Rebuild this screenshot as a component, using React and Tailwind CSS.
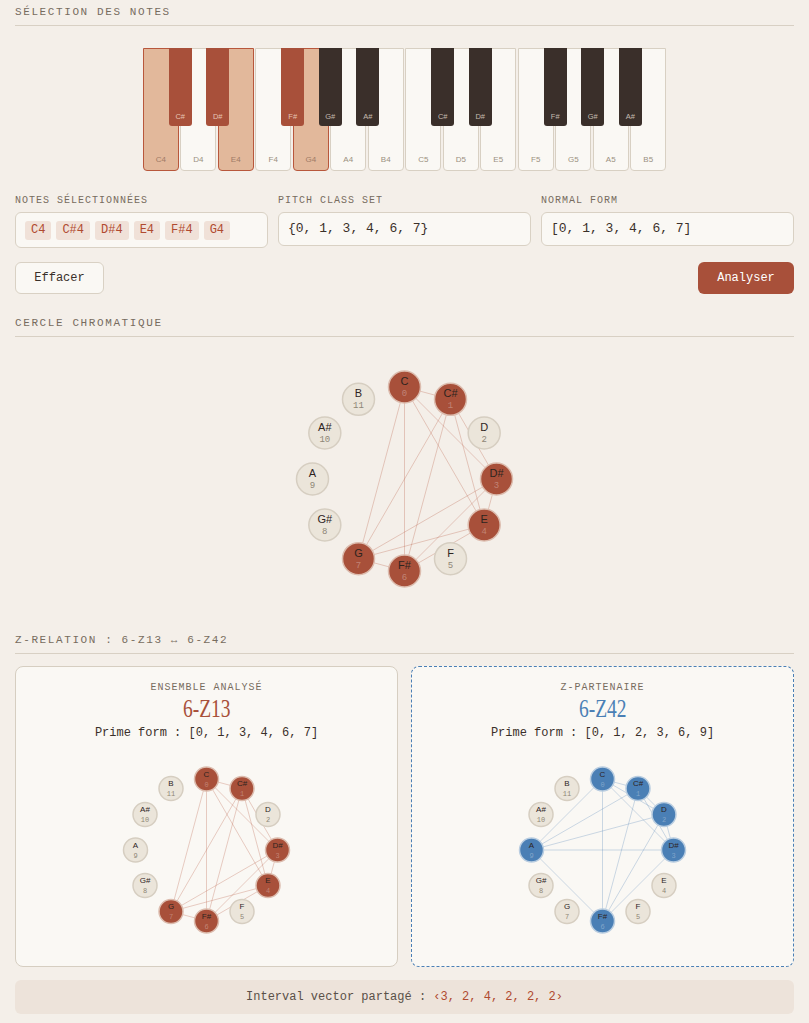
const NOTES = ['C', 'C#', 'D', 'D#', 'E', 'F', 'F#', 'G', 'G#', 'A', 'A#', 'B']

const WHITES = [
  { n: 'C4', on: true }, { n: 'D4' }, { n: 'E4', on: true }, { n: 'F4' }, { n: 'G4', on: true },
  { n: 'A4' }, { n: 'B4' }, { n: 'C5' }, { n: 'D5' }, { n: 'E5' }, { n: 'F5' }, { n: 'G5' },
  { n: 'A5' }, { n: 'B5' },
]

const BLACKS = [
  { n: 'C#', at: 1, on: true }, { n: 'D#', at: 2, on: true }, { n: 'F#', at: 4, on: true },
  { n: 'G#', at: 5 }, { n: 'A#', at: 6 }, { n: 'C#', at: 8 }, { n: 'D#', at: 9 },
  { n: 'F#', at: 11 }, { n: 'G#', at: 12 }, { n: 'A#', at: 13 },
]

const CHIPS = ['C4', 'C#4', 'D#4', 'E4', 'F#4', 'G4']

function Heading({ children }) {
  return (
    <div className="border-b border-[#d8d0c4] pb-[5px] text-[11px] leading-4 tracking-[1.6px] text-[#776c5e]">
      {children}
    </div>
  )
}

function Piano() {
  return (
    <div className="relative mx-auto mt-[22px] flex h-[123px] w-[523.5px] gap-[1.5px] font-['Liberation_Sans',sans-serif]">
      {WHITES.map(k => (
        <div key={k.n}
          className={k.on
            ? 'flex h-full w-[36px] items-end justify-center rounded-b-[4px] border border-[#b8573c] bg-[#e2b89b] pb-[5px] text-[8px] leading-[10px] text-[#a07a66]'
            : 'flex h-full w-[36px] items-end justify-center rounded-b-[4px] border border-[#d8d0c3] bg-[#faf8f4] pb-[5px] text-[8px] leading-[10px] text-[#9a9080]'}>
          {k.n}
        </div>
      ))}
      {BLACKS.map(k => (
        <div key={k.at}
          style={{ left: k.at * 37.5 - 11.5 }}
          className={k.on
            ? 'absolute top-0 flex h-[78px] w-[23px] items-end justify-center rounded-b-[3px] bg-[#a8503a] pb-[4px] text-[7.5px] leading-[10px] text-[#e6c4b4]'
            : 'absolute top-0 flex h-[78px] w-[23px] items-end justify-center rounded-b-[3px] bg-[#3a2f2a] pb-[4px] text-[7.5px] leading-[10px] text-[#c4bab0]'}>
          {k.n}
        </div>
      ))}
    </div>
  )
}

function PcCircle({ w, h, r, nr, set, fill, ring, line, big }) {
  const cx = w / 2
  const cy = h / 2
  const pts = NOTES.map((n, i) => {
    const a = ((i * 30 - 90) * Math.PI) / 180
    return { n, i, x: cx + r * Math.cos(a), y: cy + r * Math.sin(a) }
  })
  const sel = pts.filter(p => set.includes(p.i))
  const lines = []
  for (let a = 0; a < sel.length; a++)
    for (let b = a + 1; b < sel.length; b++) lines.push([sel[a], sel[b]])

  return (
    <svg viewBox={`0 0 ${w} ${h}`} width={w} height={h} className="mx-auto block">
      {lines.map(([p, q]) => (
        <line key={p.i + '-' + q.i} x1={p.x} y1={p.y} x2={q.x} y2={q.y}
          stroke={line} strokeOpacity="0.28" strokeWidth="1" />
      ))}
      {pts.map(p => {
        const on = set.includes(p.i)
        return (
          <g key={p.i}>
            <circle cx={p.x} cy={p.y} r={nr} fill={on ? fill : '#ebe5da'}
              stroke={on ? ring : '#d6cec1'} strokeWidth="1.5" />
            <text x={p.x} y={p.y - (big ? 6 : 4.7)} textAnchor="middle" dominantBaseline="central"
              fontSize={big ? 11 : 8} fill="#2e241e" fontFamily="Liberation Sans, sans-serif">{p.n}</text>
            <text x={p.x} y={p.y + (big ? 7 : 5.7)} textAnchor="middle" dominantBaseline="central"
              fontSize={big ? 9 : 7} fill={on ? '#ffffff' : '#8e8576'} fillOpacity={on ? 0.3 : 1}
              fontFamily="Liberation Mono, monospace">{p.i}</text>
          </g>
        )
      })}
    </svg>
  )
}

function SetCard({ label, name, prime, set, blue }) {
  return (
    <div className={blue
      ? 'h-[301px] rounded-lg border border-dashed border-[#4a7fb5] bg-[#faf8f4] pt-[15px] text-center'
      : 'h-[301px] rounded-lg border border-[#d6cec1] bg-[#faf8f4] pt-[15px] text-center'}>
      <div className="text-[10px] leading-3 tracking-[1px] text-[#776c5e]">{label}</div>
      <div className={blue
        ? "mt-[1px] text-[26px] leading-[28px] text-[#4a7fb5] font-['Liberation_Serif',serif]"
        : "mt-[1px] text-[26px] leading-[28px] text-[#a8503a] font-['Liberation_Serif',serif]"}>
        <span className="inline-block scale-x-75">{name}</span>
      </div>
      <div className="mt-[2px] text-[12px] leading-4 text-[#3a302a]">Prime form : {prime}</div>
      <div className="mt-[14px]">
        <PcCircle w={381} h={190} r={71} nr={12} set={set}
          fill={blue ? '#4a7fb5' : '#a8503a'}
          ring={blue ? '#b9cde0' : '#dcbcae'}
          line={blue ? '#4a7fb5' : '#b5543a'} />
      </div>
    </div>
  )
}

export default function App() {
  return (
    <div className="min-h-screen bg-[#f4efe9] px-[15px] pt-1 pb-2 text-[#3a302a] font-['Liberation_Mono',monospace]">
      <Heading>SÉLECTION DES NOTES</Heading>
      <Piano />

      <div className="mt-[23px] grid grid-cols-3 items-start gap-[10px]">
        <div>
          <div className="mb-1 text-[10px] leading-[14px] tracking-[1px] text-[#776c5e]">NOTES SÉLECTIONNÉES</div>
          <div className="flex h-[36px] items-center gap-[5px] rounded-md border border-[#d9d1c4] bg-[#faf8f4] px-[9px]">
            {CHIPS.map(c => (
              <span key={c} className="rounded-[3px] bg-[#f0e1d8] px-1.5 text-[12px] leading-[19px] text-[#b04a30]">{c}</span>
            ))}
          </div>
        </div>
        <div>
          <div className="mb-1 text-[10px] leading-[14px] tracking-[1px] text-[#776c5e]">PITCH CLASS SET</div>
          <div className="flex h-[34px] items-center rounded-md border border-[#d9d1c4] bg-[#faf8f4] px-[9px] text-[13px]">
            {'{0, 1, 3, 4, 6, 7}'}
          </div>
        </div>
        <div>
          <div className="mb-1 text-[10px] leading-[14px] tracking-[1px] text-[#776c5e]">NORMAL FORM</div>
          <div className="flex h-[34px] items-center rounded-md border border-[#d9d1c4] bg-[#faf8f4] px-[9px] text-[13px]">
            [0, 1, 3, 4, 6, 7]
          </div>
        </div>
      </div>

      <div className="mt-[14px] flex justify-between">
        <button className="h-[32px] w-[89px] rounded-md border border-[#d9d1c4] bg-[#faf8f4] text-[12px] text-[#3a302a]">Effacer</button>
        <button className="h-[32px] w-[96px] rounded-md bg-[#a8503a] text-[12px] text-white">Analyser</button>
      </div>

      <div className="mt-[21px]">
        <Heading>CERCLE CHROMATIQUE</Heading>
      </div>
      <PcCircle w={779} h={284} r={92} nr={16} set={[0, 1, 3, 4, 6, 7]}
        fill="#a8503a" ring="#dcbcae" line="#b5543a" big />

      <div className="mt-[11px]">
        <Heading>Z-RELATION : 6-Z13 ↔ 6-Z42</Heading>
      </div>

      <div className="mt-[12px] grid grid-cols-2 gap-[13px]">
        <SetCard label="ENSEMBLE ANALYSÉ" name="6-Z13" prime="[0, 1, 3, 4, 6, 7]" set={[0, 1, 3, 4, 6, 7]} />
        <SetCard label="Z-PARTENAIRE" name="6-Z42" prime="[0, 1, 2, 3, 6, 9]" set={[0, 1, 2, 3, 6, 9]} blue />
      </div>

      <div className="mt-[13px] flex h-[34px] items-center justify-center rounded-md bg-[#ede3da] text-[12px] text-[#5a5048]">
        Interval vector partagé :&nbsp;<span className="text-[#b04a30]">‹3, 2, 4, 2, 2, 2›</span>
      </div>
    </div>
  )
}
